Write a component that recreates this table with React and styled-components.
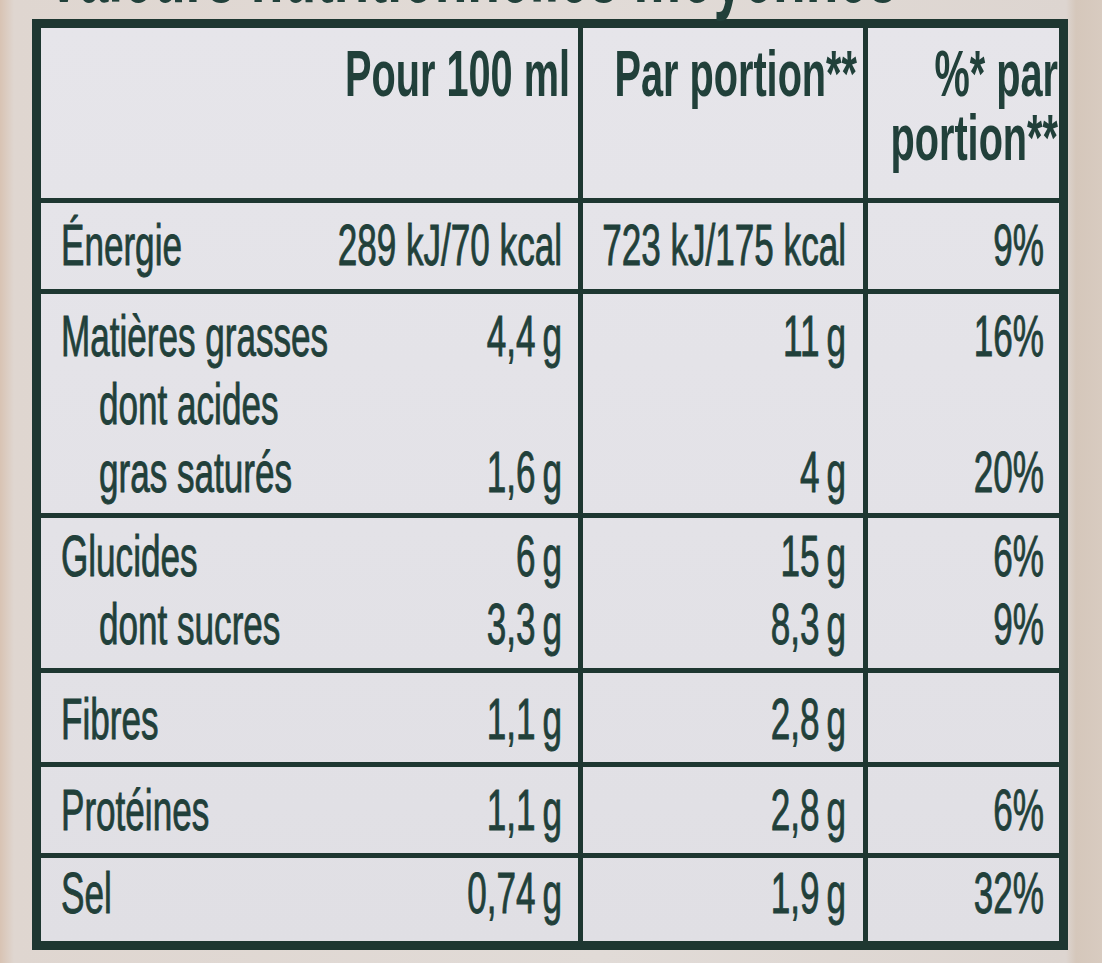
import React from "react";
import styled, { createGlobalStyle } from "styled-components";

// the label uses a very condensed face: plain Liberation Sans squeezed horizontally
const SQ = 0.605;
const SQ_HEAD = 0.62;
const SQ_TITLE = 0.6;
const INK = "#21403a";
const RULE = "#1e3731";

const GlobalStyle = createGlobalStyle`
  html, body {
    margin: 0;
    padding: 0;
  }
  body {
    width: 1102px;
    height: 963px;
    overflow: hidden;
    background: linear-gradient(
      90deg,
      #d8c3b3 0px,
      #dfd6d0 14px,
      #e1dbd7 600px,
      #ddd5d0 1066px,
      #d5c7bb 1076px,
      #d8cbc0 1102px
    );
    font-family: "Liberation Sans", "DejaVu Sans", sans-serif;
    color: ${INK};
  }
`;

const Page = styled.div`
  box-sizing: border-box;
  width: 1102px;
  height: 963px;
  padding-left: 32px;
  overflow: hidden;
`;

const Title = styled.h1`
  margin: -76px 0 0;
  padding-left: 14px;
  height: 95px;
  font-size: 89px;
  line-height: 95px;
  font-weight: 700;
  white-space: nowrap;
`;

// squeezes its content horizontally; layout inside happens in unsqueezed space
const Squeezed = styled.div`
  width: calc(100% / ${(p) => p.$k});
  transform: scaleX(${(p) => p.$k});
  transform-origin: left top;
  white-space: nowrap;
`;

const Table = styled.div`
  box-sizing: border-box;
  width: 1036px;
  border: 9px solid ${RULE};
  background: linear-gradient(180deg, #e6e5ea 0%, #e3e2e7 55%, #e0dfe4 100%);
  display: grid;
  grid-template-columns: 537px 285px 1fr;
  grid-template-rows: 170px 91px 224px 155px 94px 91px 88px;
`;

const Cell = styled.div`
  box-sizing: border-box;
  min-width: 0;
  border-top: ${(p) => (p.$top ? `5px solid ${RULE}` : "none")};
  border-left: ${(p) => (p.$left ? `5px solid ${RULE}` : "none")};
  padding: ${(p) => p.$pt || 0}px ${(p) => p.$pr || 0}px 0 ${(p) => p.$pl || 0}px;
`;

const HeadLine = styled.div`
  display: flex;
  justify-content: flex-end;
  height: 64px;
  font-size: 64px;
  line-height: 64px;
  font-weight: 700;
`;

const Line = styled.div`
  display: flex;
  justify-content: ${(p) => (p.$split ? "space-between" : "flex-end")};
  align-items: baseline;
  height: 68px;
  font-size: 58px;
  line-height: 68px;
  -webkit-text-stroke: 0.9px ${INK};
  padding-left: ${(p) => (p.$indent ? 38 / SQ : 0)}px;
`;

const rows = [
  {
    pt: 8,
    lines: [{ label: "Énergie", v: ["289 kJ/70 kcal", "723 kJ/175 kcal", "9%"] }],
  },
  {
    pt: 8,
    lines: [
      { label: "Matières grasses", v: ["4,4\u2009g", "11\u2009g", "16%"] },
      { label: "dont acides", indent: true, v: ["", "", ""] },
      { label: "gras saturés", indent: true, v: ["1,6\u2009g", "4\u2009g", "20%"] },
    ],
  },
  {
    pt: 4,
    lines: [
      { label: "Glucides", v: ["6\u2009g", "15\u2009g", "6%"] },
      { label: "dont sucres", indent: true, v: ["3,3\u2009g", "8,3\u2009g", "9%"] },
    ],
  },
  { pt: 12, lines: [{ label: "Fibres", v: ["1,1\u2009g", "2,8\u2009g", ""] }] },
  { pt: 9, lines: [{ label: "Protéines", v: ["1,1\u2009g", "2,8\u2009g", "6%"] }] },
  { pt: 1, lines: [{ label: "Sel", v: ["0,74\u2009g", "1,9\u2009g", "32%"] }] },
];

function Row({ row }) {
  return (
    <>
      <Cell $top $pt={row.pt} $pl={20} $pr={16}>
        <Squeezed $k={SQ}>
          {row.lines.map((l, i) => (
            <Line key={i} $split $indent={l.indent}>
              <span>{l.label}</span>
              <span>{l.v[0]}</span>
            </Line>
          ))}
        </Squeezed>
      </Cell>
      <Cell $top $left $pt={row.pt} $pr={17}>
        <Squeezed $k={SQ}>
          {row.lines.map((l, i) => (
            <Line key={i}>{l.v[1]}</Line>
          ))}
        </Squeezed>
      </Cell>
      <Cell $top $left $pt={row.pt} $pr={15}>
        <Squeezed $k={SQ}>
          {row.lines.map((l, i) => (
            <Line key={i}>{l.v[2]}</Line>
          ))}
        </Squeezed>
      </Cell>
    </>
  );
}

export default function App() {
  return (
    <Page>
      <GlobalStyle />
      <Title>
        <Squeezed $k={SQ_TITLE}>Valeurs nutritionnelles moyennes</Squeezed>
      </Title>
      <Table>
        <Cell $pt={14} $pr={8}>
          <Squeezed $k={SQ_HEAD}>
            <HeadLine>Pour 100 ml</HeadLine>
          </Squeezed>
        </Cell>
        <Cell $left $pt={14} $pr={6}>
          <Squeezed $k={SQ_HEAD}>
            <HeadLine>Par portion**</HeadLine>
          </Squeezed>
        </Cell>
        <Cell $left $pt={14} $pr={1}>
          <Squeezed $k={SQ_HEAD}>
            <HeadLine>%* par</HeadLine>
            <HeadLine>portion**</HeadLine>
          </Squeezed>
        </Cell>
        {rows.map((r, i) => (
          <Row key={i} row={r} />
        ))}
      </Table>
    </Page>
  );
}
